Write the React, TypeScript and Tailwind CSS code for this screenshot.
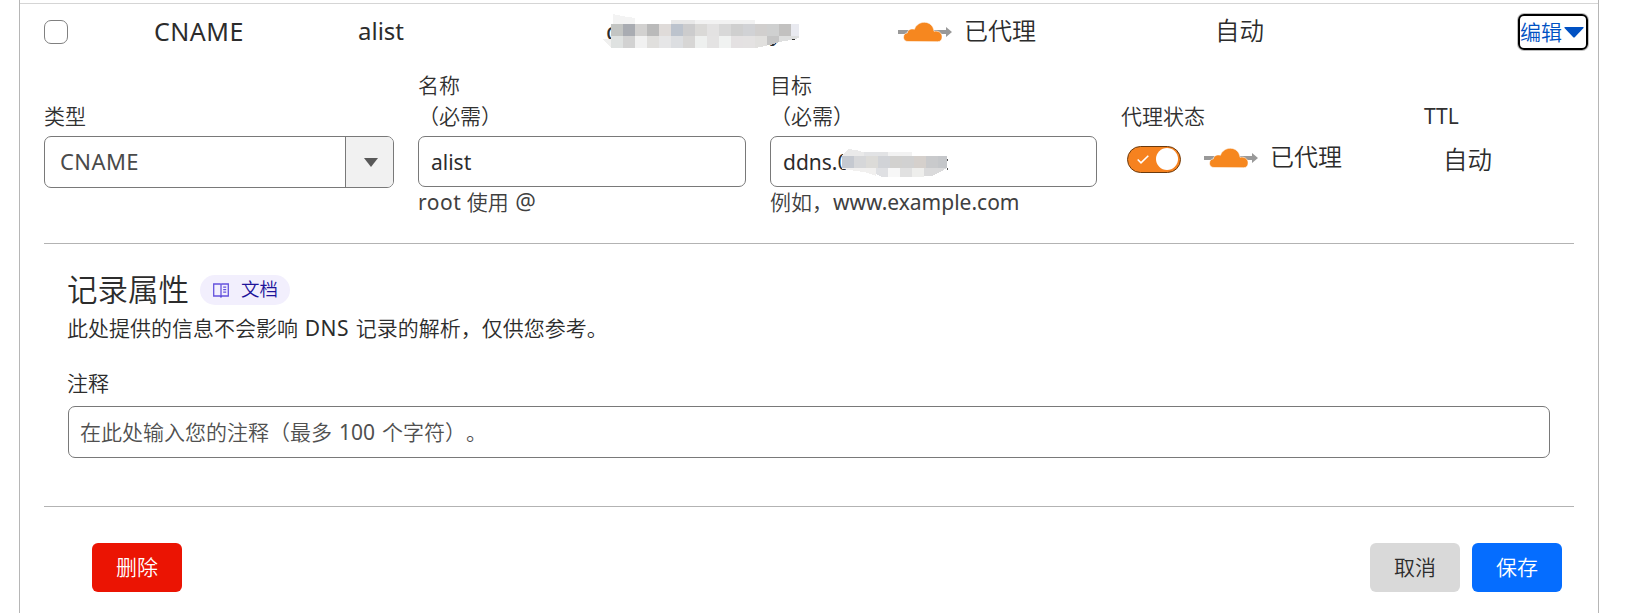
import type { ReactNode } from "react";

function CloudArrow() {
  return (
    <svg width="54" height="20" viewBox="0 0 54 20" className="block shrink-0">
      <path d="M0 8h48V5l6 5-6 5v-3H0z" fill="#999" />
      <path
        d="M10 19.500c-3 0-4.500-1.600-4.500-4.200 0-2.500 1.400-4.300 3.900-4.400-.3-2.600 3.900-5 7-3.600C17.900 3 21.800.3 26.500.3c5.100 0 9 3.700 9.500 9 3.900-.9 8.100 1.200 8.100 5.600 0 3-1.600 4.800-4.600 4.800z"
        fill="#f6871f"
        stroke="#fff"
        strokeWidth="0.6"
      />
    </svg>
  );
}

type Cell = [number, number, number, string];

function Mosaic({ cells, extras, width, height }: { cells: Cell[]; extras?: ReactNode; width: number; height: number }) {
  return (
    <svg width={width} height={height} viewBox={`0 0 ${width} ${height}`} className="block" shapeRendering="crispEdges">
      {extras}
      {cells.map(([x, y, w, fill], i) => (
        <rect key={i} x={x} y={y} width={w} height="12" fill={fill} />
      ))}
    </svg>
  );
}

const upper = ["#c3c5c3", "#a9acb2", "#d2d1d0", "#bababa", "#dfdbd9", "#bcc3cd", "#cccccd", "#dad9d7", "#e3e2e2", "#d8d8d8", "#cfcfcf", "#d1d2d5", "#d1cfce", "#cfd0d0", "#c2c1c0"];
const lower = ["#dfe2e1", "#d2d2d2", "#f1f1f1", "#e0dfdd", "#e6e6e7", "#dcdee1", "#d7d6d5", "#eef0ef", "#e4e3e3", "#f0f2f1", "#e4e1e2", "#e4e2e2"];
const hostCells: Cell[] = [
  ...upper.map((c, i): Cell => [9 + i * 12, 10, 12, c]),
  [189, 10, 8, "#e9eaf0"],
  ...lower.map((c, i): Cell => [9 + i * 12, 22, 12, c]),
];

const targetUpper = ["#c5c9d0", "#d6d7d9", "#dcdbd8", "#d1d3d7", "#d2d1cf", "#d1d1d1", "#d5d0cc", "#c9cacc"];
const targetCells: Cell[] = [...targetUpper.map((c, i): Cell => [i * 12, 7, 12, c]), [96, 7, 9, "#c5c7ca"]];

const label = "block text-[21px] leading-[31px] whitespace-nowrap text-[#313131]";

export default function App() {
  return (
    <div className="h-[613px] w-[1643px] overflow-hidden bg-white pl-[19px] font-['Open_Sans','Noto_Sans_CJK_SC',sans-serif] font-[350] text-[#2c2c2c] [text-spacing-trim:space-all]">
      <div className="h-[613px] w-[1580px] border-x border-[#b6b6b6] pt-[3px]">
        <div className="flex h-[57px] items-center border-t border-[#d5d5d5] pl-6 text-[24px] leading-[34px]">
          <div className="size-6 rounded-[7px] border border-[#808080]" />
          <div className="ml-[86px] w-[204px] pb-[2px] font-['Noto_Sans'] text-[25px] font-normal tracking-[0.5px]">CNAME</div>
          <div className="w-[244px] pb-[2px] font-['Noto_Sans'] font-normal">alist</div>
          <div className="relative h-[36px] w-[296px] font-['Noto_Sans'] font-normal">
            <span className="absolute top-0 left-1">d</span>
            <span className="absolute top-0 left-[168px]">y</span>
            <div className="absolute top-0 left-0">
              <Mosaic
                width={200}
                height={36}
                cells={hostCells}
                extras={
                  <>
                    <path d="M11 0l9 2 13 2v6H11z" fill="#f3f3f3" />
                    <path d="M0 25h9v9z" fill="#f0f0ef" />
                    <rect x="69" y="6" width="24" height="4" fill="#e8e8e8" />
                    <rect x="93" y="6" width="60" height="4" fill="#f2f2f2" />
                    <path d="M153 22h24v5l-13 5-11 2z" fill="#e1e0de" />
                    <path d="M165 22h12v6l-8 3h-4z" fill="#c5c5c5" />
                    <path d="M177 22h20v2l-8 2-12 2z" fill="#dedfdf" />
                    <rect x="190" y="25" width="3" height="1" fill="#333" />
                  </>
                }
              />
            </div>
          </div>
          <CloudArrow />
          <span className="ml-[12px] w-[251px] pb-[2px]">已代理</span>
          <span className="w-[303px] pb-[2px] text-[24.500px]">自动</span>
          <button className="flex h-9 w-[70px] shrink-0 items-center rounded-[6px] border-2 border-black text-[21px] leading-[30px] text-[#0051c3] ring-1 ring-black/25">
            <span className="whitespace-nowrap">编辑</span>
            <svg width="20" height="11" viewBox="0 0 20 11" className="ml-[2px] shrink-0">
              <path d="M1 0h18q1 0 .5 1L11 10q-1 1-2 0L.5 1Q0 0 1 0z" fill="#0051c3" />
            </svg>
          </button>
        </div>

        <div className="ml-6 h-[184px] w-[1530px] border-b border-[#b3b3b3] pt-[10px]">
          <div className="flex items-start">
            <div className="mr-6 w-[350px] pt-[31px]">
              <span className={label}>类型</span>
              <div className="mt-[4px] flex h-[52px] overflow-hidden rounded-[7px] border border-[#797979]">
                <span className="flex-1 pl-[15px] font-['Noto_Sans'] text-[22px] leading-[49px] font-normal tracking-[0.4px] text-[#4a4a4a]">CNAME</span>
                <span className="flex w-[48px] items-center justify-center border-l border-[#797979] bg-[#f1f1f1] pt-px pl-[2px]">
                  <svg width="14" height="9" viewBox="0 0 14 9">
                    <path d="M0 0h14L7 9z" fill="#595959" />
                  </svg>
                </span>
              </div>
            </div>
            <div className="mr-6 w-[328px]">
              <span className={label}>名称</span>
              <span className={label}>（必需）</span>
              <div className="mt-[4px] h-[51px] rounded-[7px] border border-[#797979] pl-3 font-['Noto_Sans'] text-[21px] leading-[51px] font-normal">alist</div>
              <span className="block text-[21px] leading-[30px] text-[#404040]">
                <span className="font-['Noto_Sans'] font-normal tracking-[0.5px]">root</span> 使用{" "}
                <span className="ml-px font-['Open_Sans'] text-[23px] leading-[20px] font-normal">@</span>
              </span>
            </div>
            <div className="mr-6 w-[327px]">
              <span className={label}>目标</span>
              <span className={label}>（必需）</span>
              <div className="relative mt-[4px] h-[51px] rounded-[7px] border border-[#797979] pl-3 font-['Noto_Sans'] text-[21px] leading-[51px] font-normal">
                ddns.0
                <div className="absolute top-[12px] left-[71px]">
                  <Mosaic
                    width={107}
                    height={28}
                    cells={targetCells}
                    extras={
                      <>
                        <path d="M0 7l6-7 8 1 9 3v3z" fill="#eaeaea" />
                        <path d="M22 3h24v4H22z" fill="#e2e3e5" />
                        <path d="M46 3h24v4H46z" fill="#f2f2f2" />
                        <path d="M0 19h34v8l-12-4-22-3z" fill="#f1f0ef" />
                        <path d="M34 19h12v9H40l-6-3z" fill="#dfe0e3" />
                        <path d="M46 19h12v9H46z" fill="#f7f7f7" />
                        <path d="M58 19h12v9H58z" fill="#e1e1e1" />
                        <path d="M70 19h12v9H70z" fill="#eeeeec" />
                        <path d="M82 19h23l-7 4-8 4h-8z" fill="#dadadb" />
                        <rect x="105" y="10" width="1" height="2" fill="#555" />
                        <rect x="105" y="19" width="1" height="2" fill="#555" />
                      </>
                    }
                  />
                </div>
              </div>
              <span className="block text-[21px] leading-[30px] whitespace-nowrap text-[#404040]">
                例如，<span className="font-['Noto_Sans'] font-normal">www.example.com</span>
              </span>
            </div>
            <div className="w-[303px] pt-[31px]">
              <span className={label}>代理状态</span>
              <div className="flex h-[46px] items-center pl-[6px] text-[24px] leading-[34px]">
                <span className="mt-[8px] flex h-[27px] w-[54px] shrink-0 items-center justify-between rounded-full border border-[#6b3a0d] bg-[#f6821f] pr-[2px] pl-[9px]">
                  <svg width="12" height="9" viewBox="0 0 12 9" fill="none" stroke="#fff" strokeWidth="1.600">
                    <path d="M.7 4.500l3.300 3.300L11.300.7" />
                  </svg>
                  <span className="size-[22px] rounded-full bg-white" />
                </span>
                <span className="mt-[5px] ml-[23px]">
                  <CloudArrow />
                </span>
                <span className="mt-[4px] ml-[12px] whitespace-nowrap">已代理</span>
              </div>
            </div>
            <div className="pt-[31px]">
              <span className={`${label} font-['Noto_Sans'] !font-normal`}>TTL</span>
              <span className="mt-[10px] block pl-[19px] text-[24.500px] leading-[36px] whitespace-nowrap">自动</span>
            </div>
          </div>
        </div>

        <div className="ml-6 h-[263px] w-[1530px] border-b border-[#b3b3b3] px-6 pt-[27px]">
          <div className="flex h-[37px] items-center">
            <h2 className="-ml-px text-[30.500px] leading-[37px] whitespace-nowrap">记录属性</h2>
            <span className="ml-[11px] flex h-[30px] w-[90px] items-center rounded-full bg-[#f2effd] pb-px pl-[13px] text-[18.500px] leading-[26px] whitespace-nowrap text-[#1e149a]">
              <svg width="16" height="15" viewBox="0 0 16 15" fill="none" stroke="#6452dd" strokeWidth="1.300" className="mt-[2px] mr-[12px] shrink-0">
                <path d="M.7 1h6.500l.8.500.8-.5h6.500v12H9l-1 1-1-1H.7zM8 1.500V14M10.200 4.200h3M10.200 6.700h3M10.200 9.200h3" />
              </svg>
              文档
            </span>
          </div>
          <p className="mt-[4px] -ml-px text-[21px] leading-[32px] whitespace-nowrap [word-spacing:1.2px]">
            此处提供的信息不会影响 <span className="font-['Noto_Sans'] font-normal tracking-[0.5px]">DNS</span> 记录的解析，仅供您参考。
          </p>
          <span className="mt-[23px] -ml-px block text-[21px] leading-[32px]">注释</span>
          <div className="mt-[7px] h-[52px] rounded-[7px] border border-[#797979] pl-[11px] text-[21px] leading-[50px] whitespace-nowrap text-[#505050] [word-spacing:1.5px]">
            在此处输入您的注释（最多 <span className="font-['Noto_Sans'] font-normal">100</span> 个字符）。
          </div>
        </div>

        <div className="ml-6 flex w-[1530px] gap-3 pt-9 pr-3 pl-12 text-[21px] leading-[31px]">
          <button className="mr-auto h-[49px] w-[90px] rounded-[6px] bg-[#eb1403] text-white">删除</button>
          <button className="h-[49px] w-[90px] rounded-[6px] bg-[#d9d9d9]">取消</button>
          <button className="h-[49px] w-[90px] rounded-[6px] bg-[#056dff] text-white">保存</button>
        </div>
      </div>
    </div>
  );
}
